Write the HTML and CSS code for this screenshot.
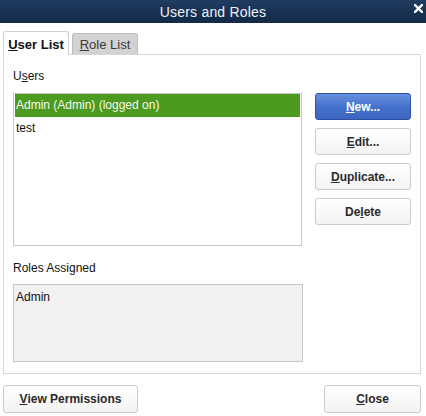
FILE: index.html
```html
<!DOCTYPE html>
<html>
<head>
<meta charset="utf-8">
<link rel="stylesheet" href="styles.css">
</head>
<body>
<div class="titlebar">
  <span class="title">Users and Roles</span>
  <svg class="close-x" width="9" height="9" viewBox="0 0 9 9"><path d="M1 1 L8 8 M8 1 L1 8" stroke="#ffffff" stroke-width="2.4" stroke-linecap="square"/></svg>
</div>
<div class="tabs">
  <div class="tab active"><u>U</u>ser List</div>
  <div class="tab"><u>R</u>ole List</div>
</div>
<div class="panel">
  <div class="label first">U<u>s</u>ers</div>
  <div class="row">
    <div class="list users">
      <div class="item selected">Admin (Admin) (logged on)</div>
      <div class="item">test</div>
    </div>
    <div class="buttons">
      <button class="btn primary"><u>N</u>ew...</button>
      <button class="btn"><u>E</u>dit...</button>
      <button class="btn"><u>D</u>uplicate...</button>
      <button class="btn">De<u>l</u>ete</button>
    </div>
  </div>
  <div class="label second">Roles Assigned</div>
  <div class="list roles">
    <div class="item">Admin</div>
  </div>
</div>
<div class="footer">
  <button class="btn perm"><u>V</u>iew Permissions</button>
  <button class="btn closebtn"><u>C</u>lose</button>
</div>
</body>
</html>
```
FILE: styles.css
```css
html, body {
  margin: 0;
  padding: 0;
  background: #ffffff;
  font-family: "Liberation Sans", Arial, sans-serif;
  font-size: 12px;
  color: #111111;
}
u { text-decoration: underline; text-underline-offset: 1px; }
.titlebar {
  height: 23px;
  background: linear-gradient(#203c62, #17304f 60%, #132a48);
  display: flex;
  align-items: center;
  justify-content: center;
  position: relative;
}
.title {
  color: #eef1f6;
  font-size: 14px;
  letter-spacing: 0.2px;
}
.close-x {
  position: absolute;
  right: 3px;
  top: 4px;
}
.tabs {
  display: flex;
  align-items: flex-end;
  padding-left: 3px;
  margin-top: 8px;
  gap: 3px;
  position: relative;
  z-index: 1;
}
.tab {
  width: 66px;
  height: 21px;
  box-sizing: border-box;
  border: 1px solid #bdbdbd;
  border-bottom: none;
  border-radius: 3px 3px 0 0;
  background: #d2d2d2;
  color: #3a3a3a;
  font-size: 13px;
  display: flex;
  align-items: center;
  justify-content: center;
}
.tab.active {
  height: 24px;
  background: #ffffff;
  border-color: #d0d0d0;
  font-weight: bold;
  color: #111;
  margin-bottom: -1px;
  padding-top: 1px;
}
.panel {
  margin: 0 5px 0 3px;
  height: 320px;
  box-sizing: border-box;
  border: 1px solid #d6d6d6;
  padding: 0 9px;
}
.label {
  line-height: 14px;
  font-size: 12px;
}
.label.first { margin-top: 14px; margin-bottom: 10px; }
.label.second { margin-top: 15px; margin-bottom: 9px; }
.row {
  display: flex;
  align-items: flex-start;
}
.list {
  width: 290px;
  box-sizing: border-box;
  border: 1px solid #c6c6c6;
  padding: 0 1px 0 1px;
}
.list.users { height: 153px; }
.list.roles {
  height: 78px;
  background: #f3f0f2;
  padding-top: 5px;
}
.item {
  height: 23px;
  line-height: 23px;
  padding-left: 1px;
  font-size: 12px;
}
.roles .item { height: 14px; line-height: 14px; }
.item.selected {
  background: #4c9a1f;
  color: #f4f8ee;
}
.buttons {
  margin-left: 13px;
  display: flex;
  flex-direction: column;
  gap: 8px;
}
.btn {
  font-family: "Liberation Sans", Arial, sans-serif;
  font-size: 12px;
  font-weight: bold;
  color: #2a2a2a;
  height: 27px;
  box-sizing: border-box;
  border: 1px solid #cbcbcb;
  border-radius: 3px;
  background: linear-gradient(#ffffff, #f3f3f3);
  padding: 0;
  margin: 0;
}
.buttons .btn { width: 96px; }
.btn.primary {
  background: linear-gradient(#6690de, #4470cc 55%, #3d66c2);
  border-color: #2d52a4;
  color: #ffffff;
}
.footer {
  display: flex;
  justify-content: space-between;
  margin: 11px 5px 0 3px;
}
.btn.perm { width: 135px; height: 28px; }
.btn.closebtn { width: 97px; height: 28px; }
```
